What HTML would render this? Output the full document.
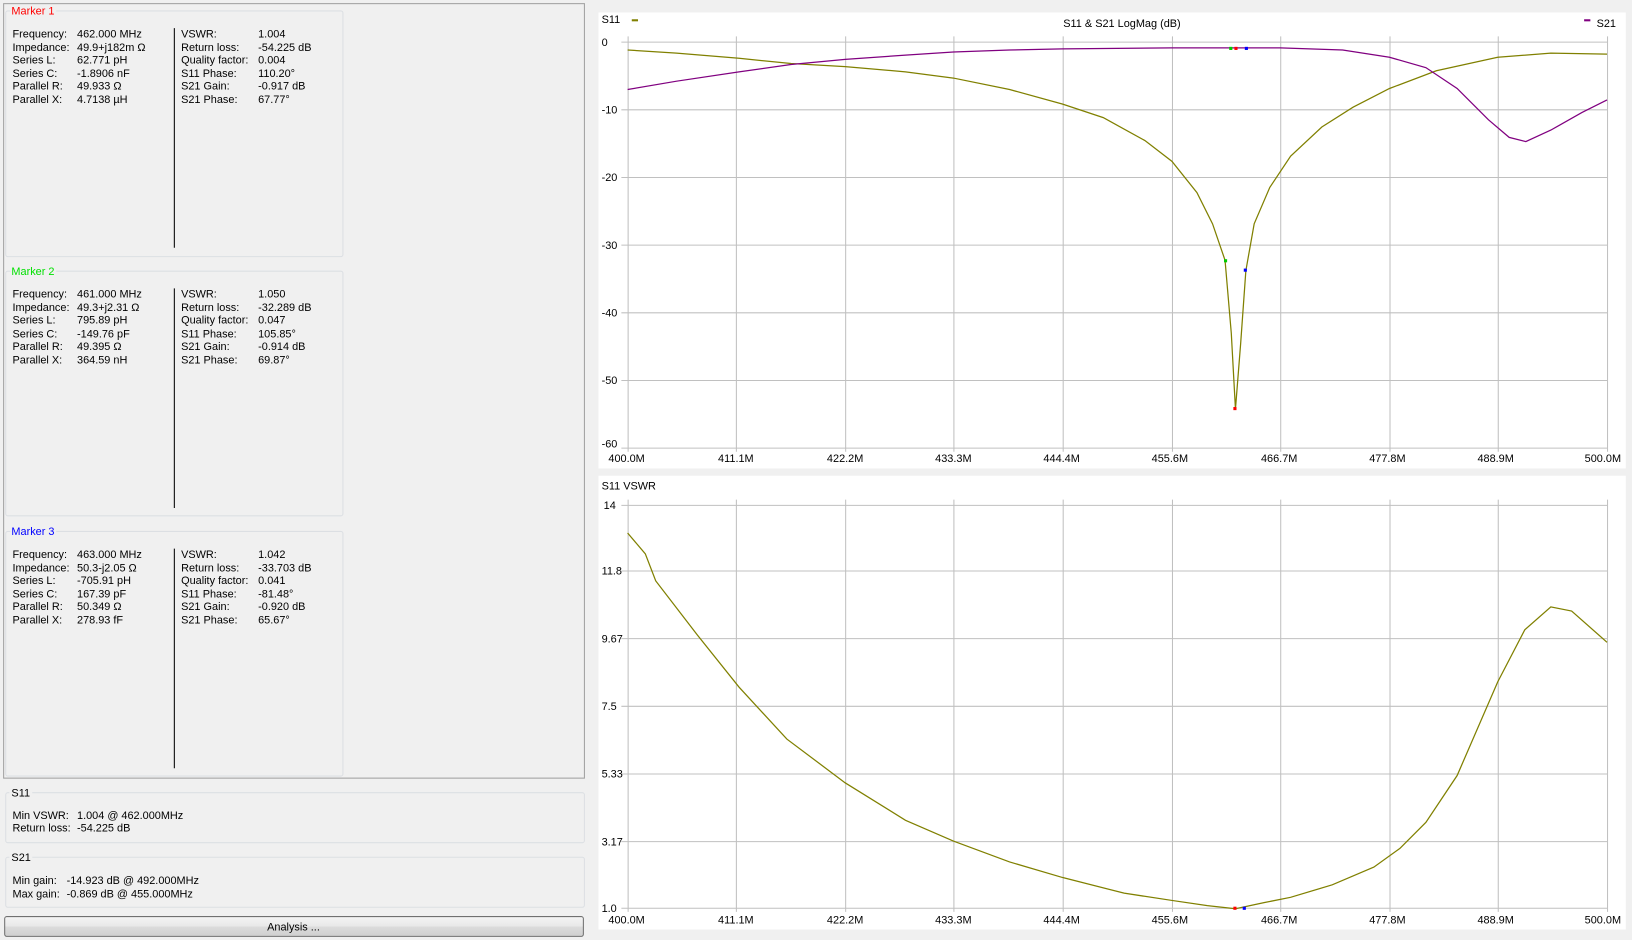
<!DOCTYPE html>
<html><head><meta charset="utf-8"><style>
html,body{margin:0;padding:0;background:#f0f0f0;width:1632px;height:940px;overflow:hidden}
svg{display:block}
text{font-family:"Liberation Sans",sans-serif;font-size:10.5px;fill:#000}
</style></head><body>
<svg width="1632" height="940" viewBox="0 0 1568 903" preserveAspectRatio="none" xmlns="http://www.w3.org/2000/svg">
<rect width="1568" height="903" fill="#f0f0f0"/>
<!-- left panel -->
<rect x="3.5" y="3.5" width="558" height="744" fill="#f0f0f0" stroke="#a0a0a0"/>
<g fill="none" stroke="#dcdfe3">
<rect x="5.5" y="10.5" width="324" height="236" rx="2"/>
<rect x="5.5" y="260.5" width="324" height="235" rx="2"/>
<rect x="5.5" y="510.5" width="324" height="235" rx="2"/>
<rect x="5.5" y="761.5" width="556" height="48" rx="2"/>
<rect x="5.5" y="823.5" width="556" height="48" rx="2"/>
</g>
<rect x="10" y="5" width="44" height="12" fill="#f0f0f0"/>
<rect x="10" y="255" width="44" height="12" fill="#f0f0f0"/>
<rect x="10" y="505" width="44" height="12" fill="#f0f0f0"/>
<rect x="9" y="755" width="22" height="12" fill="#f0f0f0"/>
<rect x="9" y="817" width="22" height="12" fill="#f0f0f0"/>
<text x="11" y="14" style="fill:#ff0000">Marker 1</text>
<text x="11" y="264" style="fill:#00e000">Marker 2</text>
<text x="11" y="514" style="fill:#0000ff">Marker 3</text>
<g stroke="#000"><line x1="167.5" y1="27" x2="167.5" y2="238"/><line x1="167.5" y1="277" x2="167.5" y2="488"/><line x1="167.5" y1="527" x2="167.5" y2="738"/></g>
<g>
<text x="12" y="36">Frequency:</text><text x="12" y="49">Impedance:</text><text x="12" y="61">Series L:</text><text x="12" y="74">Series C:</text><text x="12" y="86">Parallel R:</text><text x="12" y="99">Parallel X:</text>
<text x="74" y="36">462.000 MHz</text><text x="74" y="49">49.9+j182m Ω</text><text x="74" y="61">62.771 pH</text><text x="74" y="74">-1.8906 nF</text><text x="74" y="86">49.933 Ω</text><text x="74" y="99">4.7138 µH</text>
<text x="174" y="36">VSWR:</text><text x="174" y="49">Return loss:</text><text x="174" y="61">Quality factor:</text><text x="174" y="74">S11 Phase:</text><text x="174" y="86">S21 Gain:</text><text x="174" y="99">S21 Phase:</text>
<text x="248" y="36">1.004</text><text x="248" y="49">-54.225 dB</text><text x="248" y="61">0.004</text><text x="248" y="74">110.20°</text><text x="248" y="86">-0.917 dB</text><text x="248" y="99">67.77°</text>
</g>
<g transform="translate(0,250)">
<text x="12" y="36">Frequency:</text><text x="12" y="49">Impedance:</text><text x="12" y="61">Series L:</text><text x="12" y="74">Series C:</text><text x="12" y="86">Parallel R:</text><text x="12" y="99">Parallel X:</text>
<text x="74" y="36">461.000 MHz</text><text x="74" y="49">49.3+j2.31 Ω</text><text x="74" y="61">795.89 pH</text><text x="74" y="74">-149.76 pF</text><text x="74" y="86">49.395 Ω</text><text x="74" y="99">364.59 nH</text>
<text x="174" y="36">VSWR:</text><text x="174" y="49">Return loss:</text><text x="174" y="61">Quality factor:</text><text x="174" y="74">S11 Phase:</text><text x="174" y="86">S21 Gain:</text><text x="174" y="99">S21 Phase:</text>
<text x="248" y="36">1.050</text><text x="248" y="49">-32.289 dB</text><text x="248" y="61">0.047</text><text x="248" y="74">105.85°</text><text x="248" y="86">-0.914 dB</text><text x="248" y="99">69.87°</text>
</g>
<g transform="translate(0,500)">
<text x="12" y="36">Frequency:</text><text x="12" y="49">Impedance:</text><text x="12" y="61">Series L:</text><text x="12" y="74">Series C:</text><text x="12" y="86">Parallel R:</text><text x="12" y="99">Parallel X:</text>
<text x="74" y="36">463.000 MHz</text><text x="74" y="49">50.3-j2.05 Ω</text><text x="74" y="61">-705.91 pH</text><text x="74" y="74">167.39 pF</text><text x="74" y="86">50.349 Ω</text><text x="74" y="99">278.93 fF</text>
<text x="174" y="36">VSWR:</text><text x="174" y="49">Return loss:</text><text x="174" y="61">Quality factor:</text><text x="174" y="74">S11 Phase:</text><text x="174" y="86">S21 Gain:</text><text x="174" y="99">S21 Phase:</text>
<text x="248" y="36">1.042</text><text x="248" y="49">-33.703 dB</text><text x="248" y="61">0.041</text><text x="248" y="74">-81.48°</text><text x="248" y="86">-0.920 dB</text><text x="248" y="99">65.67°</text>
</g>
<text x="11" y="765">S11</text>
<text x="12" y="787">Min VSWR:</text><text x="74" y="787">1.004 @ 462.000MHz</text>
<text x="12" y="799">Return loss:</text><text x="74" y="799">-54.225 dB</text>
<text x="11" y="827">S21</text>
<text x="12" y="849">Min gain:</text><text x="64" y="849">-14.923 dB @ 492.000MHz</text>
<text x="12" y="862">Max gain:</text><text x="64" y="862">-0.869 dB @ 455.000MHz</text>
<defs><linearGradient id="bg" x1="0" y1="0" x2="0" y2="1"><stop offset="0" stop-color="#f4f4f4"/><stop offset="0.5" stop-color="#e8e8e8"/><stop offset="0.5" stop-color="#dcdcdc"/><stop offset="1" stop-color="#cfcfcf"/></linearGradient></defs>
<rect x="4.5" y="880.5" width="556" height="19" rx="2" fill="url(#bg)" stroke="#707070"/>
<text x="282" y="894" text-anchor="middle">Analysis ...</text>

<!-- chart 1 -->
<rect x="575" y="12" width="987" height="438" fill="#fff"/>
<g stroke="#c0c0c0" stroke-width="1">
<line x1="603.5" y1="35" x2="603.5" y2="434"/><line x1="707.5" y1="35" x2="707.5" y2="434"/><line x1="812.5" y1="35" x2="812.5" y2="434"/><line x1="916.5" y1="35" x2="916.5" y2="434"/><line x1="1021.5" y1="35" x2="1021.5" y2="434"/><line x1="1126.5" y1="35" x2="1126.5" y2="434"/><line x1="1230.5" y1="35" x2="1230.5" y2="434"/><line x1="1335.5" y1="35" x2="1335.5" y2="434"/><line x1="1439.5" y1="35" x2="1439.5" y2="434"/><line x1="1544.5" y1="35" x2="1544.5" y2="434"/>
<line x1="597" y1="40.5" x2="1544" y2="40.5"/><line x1="597" y1="105.5" x2="1544" y2="105.5"/><line x1="597" y1="170.5" x2="1544" y2="170.5"/><line x1="597" y1="235.5" x2="1544" y2="235.5"/><line x1="597" y1="300.5" x2="1544" y2="300.5"/><line x1="597" y1="365.5" x2="1544" y2="365.5"/><line x1="597" y1="430.5" x2="1544" y2="430.5"/>
</g>
<text x="578" y="22">S11</text><line x1="607" y1="19.5" x2="613" y2="19.5" stroke="#808000" stroke-width="2"/>
<text x="1078" y="26" text-anchor="middle">S11 &amp; S21 LogMag (dB)</text>
<line x1="1522" y1="19.5" x2="1528" y2="19.5" stroke="#800080" stroke-width="2"/><text x="1534" y="26">S21</text>
<g><text x="578" y="44">0</text><text x="578" y="109">-10</text><text x="578" y="174">-20</text><text x="578" y="239">-30</text><text x="578" y="304">-40</text><text x="578" y="369">-50</text><text x="578" y="430">-60</text></g>
<g text-anchor="middle"><text x="602" y="444">400.0M</text><text x="707" y="444">411.1M</text><text x="812" y="444">422.2M</text><text x="916" y="444">433.3M</text><text x="1020" y="444">444.4M</text><text x="1124" y="444">455.6M</text><text x="1229" y="444">466.7M</text><text x="1333" y="444">477.8M</text><text x="1437" y="444">488.9M</text><text x="1540" y="444">500.0M</text></g>
<polyline fill="none" stroke="#808000" stroke-width="1.2" points="603,48 650,51 710,56 760,61 812,64 870,69 916,75 970,86 1021,100 1060,113 1100,135 1126,155 1150,185 1165,215 1177,250 1183,320 1187,393 1192,330 1197,260 1205,215 1220,180 1240,150 1270,122 1300,103 1335,85 1380,68 1439,55 1490,51 1544,52"/>
<polyline fill="none" stroke="#800080" stroke-width="1.2" points="603,86 650,78 710,69 760,62 812,57 870,53 916,50 970,48 1021,47 1126,46 1230,46 1290,48 1335,55 1370,65 1400,85 1430,115 1450,132 1466,136 1490,125 1520,108 1544,96"/>
<rect x="1185" y="391" width="3" height="3" fill="#f00"/><rect x="1176" y="249" width="3" height="3" fill="#0c0"/><rect x="1195" y="258" width="3" height="3" fill="#00f"/>
<rect x="1186" y="45" width="3" height="3" fill="#f00"/><rect x="1181" y="45" width="3" height="3" fill="#0c0"/><rect x="1196" y="45" width="3" height="3" fill="#00f"/>

<!-- chart 2 -->
<rect x="575" y="457" width="987" height="436" fill="#fff"/>
<g stroke="#c0c0c0" stroke-width="1">
<line x1="603.5" y1="480" x2="603.5" y2="876"/><line x1="707.5" y1="480" x2="707.5" y2="876"/><line x1="812.5" y1="480" x2="812.5" y2="876"/><line x1="916.5" y1="480" x2="916.5" y2="876"/><line x1="1021.5" y1="480" x2="1021.5" y2="876"/><line x1="1126.5" y1="480" x2="1126.5" y2="876"/><line x1="1230.5" y1="480" x2="1230.5" y2="876"/><line x1="1335.5" y1="480" x2="1335.5" y2="876"/><line x1="1439.5" y1="480" x2="1439.5" y2="876"/><line x1="1544.5" y1="480" x2="1544.5" y2="876"/>
<line x1="597" y1="485.5" x2="1544" y2="485.5"/><line x1="597" y1="548.5" x2="1544" y2="548.5"/><line x1="597" y1="613.5" x2="1544" y2="613.5"/><line x1="597" y1="678.5" x2="1544" y2="678.5"/><line x1="597" y1="743.5" x2="1544" y2="743.5"/><line x1="597" y1="808.5" x2="1544" y2="808.5"/><line x1="597" y1="872.5" x2="1544" y2="872.5"/>
</g>
<text x="578" y="470">S11 VSWR</text>
<g><text x="580" y="489">14</text><text x="578" y="552">11.8</text><text x="578" y="617">9.67</text><text x="578" y="682">7.5</text><text x="578" y="747">5.33</text><text x="578" y="812">3.17</text><text x="578" y="876">1.0</text></g>
<g text-anchor="middle"><text x="602" y="887">400.0M</text><text x="707" y="887">411.1M</text><text x="812" y="887">422.2M</text><text x="916" y="887">433.3M</text><text x="1020" y="887">444.4M</text><text x="1124" y="887">455.6M</text><text x="1229" y="887">466.7M</text><text x="1333" y="887">477.8M</text><text x="1437" y="887">488.9M</text><text x="1540" y="887">500.0M</text></g>
<polyline fill="none" stroke="#808000" stroke-width="1.2" points="603,512 620,532 630,558 670,610 710,660 756,710 812,752 870,788 916,808 970,828 1021,843 1080,858 1126,865 1160,870 1187,873 1215,867 1240,862 1280,850 1320,833 1345,815 1370,790 1400,745 1439,655 1465,605 1490,583 1510,587 1544,617"/>
<rect x="1185" y="871" width="3" height="3" fill="#f00"/><rect x="1194" y="871" width="3" height="3" fill="#00f"/>
</svg>
</body></html>
